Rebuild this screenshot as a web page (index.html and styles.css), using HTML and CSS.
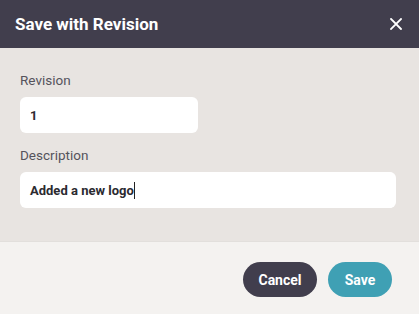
FILE: index.html
```html
<!DOCTYPE html>
<html lang="en">
<head>
    <meta charset="UTF-8">
    <title>Save with Revision</title>
    <link rel="stylesheet" href="styles.css">
</head>
<body>
    <div class="dialog">
        <header class="dialog-header">
            <h1>Save with Revision</h1>
            <button class="close" aria-label="Close">
                <svg width="12" height="12" viewBox="0 0 12 12">
                    <path d="M1 1L11 11M11 1L1 11" stroke="#fff" stroke-width="1.8" stroke-linecap="square"/>
                </svg>
            </button>
        </header>

        <div class="dialog-body">
            <div class="field">
                <label for="revision">Revision</label>
                <input type="text" id="revision" class="short" value="1">
            </div>
            <div class="field">
                <label for="description">Description</label>
                <div class="input-like">Added a new logo<span class="caret"></span></div>
            </div>
        </div>

        <footer class="dialog-footer">
            <button class="btn btn-cancel">Cancel</button>
            <button class="btn btn-save">Save</button>
        </footer>
    </div>
</body>
</html>
```

FILE: styles.css
```css
body {
    margin: 0;
    font-family: Roboto, "Liberation Sans", sans-serif;
    background: #f4f2f0;
}
.dialog {
    width: 419px;
    height: 314px;
    display: flex;
    flex-direction: column;
}
.dialog-header {
    height: 48px;
    background: #413e4d;
    display: flex;
    align-items: center;
    justify-content: space-between;
    padding: 0 17px 0 15px;
    box-sizing: border-box;
}
.dialog-header h1 {
    margin: 0;
    font-size: 17px;
    font-weight: 700;
    color: #fff;
}
.close {
    background: none;
    border: none;
    padding: 0;
    width: 12px;
    height: 12px;
    display: flex;
    cursor: pointer;
}
.dialog-body {
    background: #e8e4e1;
    padding: 24px 23px 33px 20px;
    border-bottom: 1px solid #e2dfdc;
}
.field + .field {
    margin-top: 14px;
}
.field label {
    display: block;
    font-size: 13.5px;
    line-height: 16px;
    color: #55535c;
    margin-bottom: 9px;
}
.field input,
.input-like {
    display: block;
    box-sizing: border-box;
    height: 36px;
    width: 100%;
    border: none;
    border-radius: 6px;
    background: #fff;
    padding: 0 10px;
    font-family: inherit;
    font-size: 13px;
    font-weight: 700;
    color: #2b2a30;
    outline: none;
}
.field input.short {
    width: 178px;
}
.input-like {
    display: flex;
    align-items: center;
}
.caret {
    display: inline-block;
    width: 1px;
    height: 17px;
    background: #222;
}
.dialog-footer {
    flex: 1;
    display: flex;
    justify-content: flex-end;
    align-items: flex-start;
    gap: 11px;
    padding: 20px 27px 0 0;
}
.btn {
    height: 35px;
    border: none;
    border-radius: 18px;
    color: #fff;
    font-family: inherit;
    font-size: 14px;
    font-weight: 700;
    cursor: pointer;
}
.btn-cancel {
    width: 74px;
    background: #413e4d;
}
.btn-save {
    width: 64px;
    background: #3fa0b4;
}
```
